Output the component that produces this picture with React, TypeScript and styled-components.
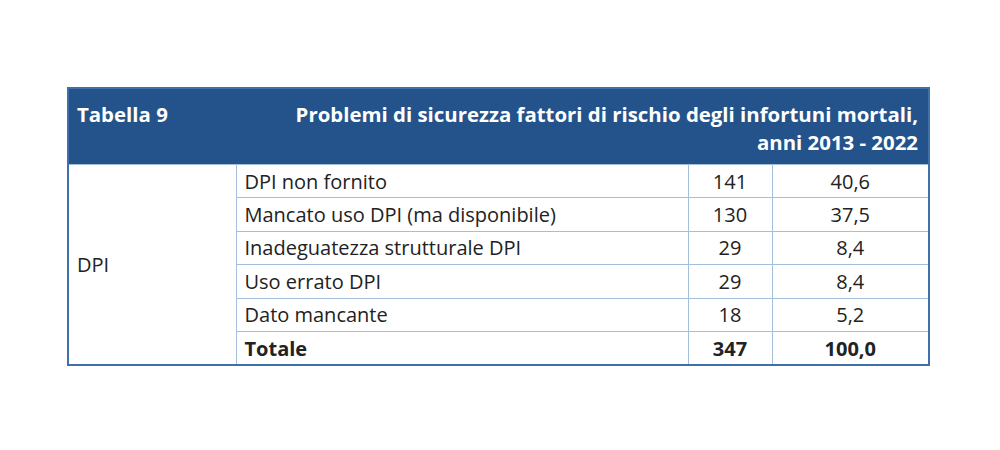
import styled, { createGlobalStyle } from 'styled-components';

const GlobalStyle = createGlobalStyle`
  html, body {
    margin: 0;
    background: #ffffff;
  }
  body {
    font-family: 'Open Sans', 'Noto Sans', sans-serif;
  }
`;

const rows = [
  { label: 'DPI non fornito', count: '141', pct: '40,6' },
  { label: 'Mancato uso DPI (ma disponibile)', count: '130', pct: '37,5' },
  { label: 'Inadeguatezza strutturale DPI', count: '29', pct: '8,4' },
  { label: 'Uso errato DPI', count: '29', pct: '8,4' },
  { label: 'Dato mancante', count: '18', pct: '5,2' },
];

const Page = styled.main`
  width: 1000px;
  height: 450px;
  padding: 87px 0 0 67px;
  box-sizing: border-box;
`;

const Table = styled.table`
  width: 861px;
  border-collapse: collapse;
  table-layout: fixed;
  font-size: 20px;
  color: #222222;
  border: 2px solid #3f70aa;
`;

const HeadCell = styled.th<{ $align?: 'left' | 'right' }>`
  background: #23538a;
  color: #ffffff;
  font-size: 20.4px;
  font-weight: 700;
  line-height: 28px;
  height: 76px;
  box-sizing: border-box;
  padding: 11px 10px 8px 8px;
  vertical-align: top;
  text-align: ${(p) => p.$align || 'left'};
`;

const Cell = styled.td<{ $center?: boolean; $bold?: boolean; $top?: boolean }>`
  height: 32.4px;
  line-height: 31px;
  padding: 0 8px;
  border: 1px solid #a3bfdc;
  border-top: ${(p) => (p.$top ? '1px solid #5a82b2' : '1px solid #a3bfdc')};
  text-align: ${(p) => (p.$center ? 'center' : 'left')};
  font-weight: ${(p) => (p.$bold ? 700 : 400)};
  white-space: nowrap;
`;

const GroupCell = styled.td`
  padding: 0 8px;
  border: 1px solid #a3bfdc;
  border-left: 2px solid #3f70aa;
  vertical-align: middle;
`;

export default function App() {
  return (
    <Page>
      <GlobalStyle />
      <Table>
        <colgroup>
          <col style={{ width: 168 }} />
          <col style={{ width: 452 }} />
          <col style={{ width: 84 }} />
          <col style={{ width: 157 }} />
        </colgroup>
        <thead>
          <tr>
            <HeadCell>Tabella 9</HeadCell>
            <HeadCell colSpan={3} $align="right">
              Problemi di sicurezza fattori di rischio degli infortuni mortali,
              <br />
              anni 2013 - 2022
            </HeadCell>
          </tr>
        </thead>
        <tbody>
          {rows.map((r, i) => (
            <tr key={r.label}>
              {i === 0 && <GroupCell rowSpan={rows.length + 1}>DPI</GroupCell>}
              <Cell>{r.label}</Cell>
              <Cell $center>{r.count}</Cell>
              <Cell $center>{r.pct}</Cell>
            </tr>
          ))}
          <tr>
            <Cell $bold $top>Totale</Cell>
            <Cell $bold $center $top>347</Cell>
            <Cell $bold $center $top>100,0</Cell>
          </tr>
        </tbody>
      </Table>
    </Page>
  );
}
